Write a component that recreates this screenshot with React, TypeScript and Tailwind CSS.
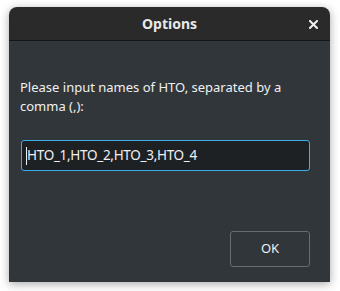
import React from "react";

export default function App() {
  return (
    <div className="w-[340px] h-[291px] bg-white pt-[7px] pl-[9px]" style={{ fontFamily: '"Noto Sans", sans-serif' }}>
      <div className="w-[321px] h-[275px] flex flex-col rounded-t-[8px] overflow-hidden shadow-[0_2px_10px_rgba(0,0,0,0.35)]">
        <div className="h-[33px] bg-[#2a2a2a] flex items-center relative border-b border-[#151515] box-content">
          <div className="w-full text-center text-[14px] font-bold text-[#e8e8e8]">Options</div>
          <div className="absolute right-[12px] top-[13px]">
            <svg width="9" height="9" viewBox="0 0 9 9" className="block">
              <path d="M1 1 L8 8 M8 1 L1 8" stroke="#f0f0f0" strokeWidth="2" strokeLinecap="square" />
            </svg>
          </div>
        </div>
        <div className="flex-1 bg-[#31363b] flex flex-col pl-[11px] pr-[20px]">
          <p className="mt-[37px] text-[13px] leading-[19px] text-[#eff0f1]">
            Please input names of HTO, separated by a comma (,):
          </p>
          <div className="mt-[24px] ml-[1px] h-[31px] border border-[#3daee9] rounded-[3px] bg-[#1e2124] flex items-center pl-[4px]">
            <span className="w-[1px] h-[18px] bg-[#eff0f1]"></span>
            <span className="text-[13.5px] tracking-[-0.3px] text-[#eff0f1]">HTO_1,HTO_2,HTO_3,HTO_4</span>
          </div>
          <div className="flex-1"></div>
          <div className="flex justify-end mb-[15px]">
            <div className="w-[80px] h-[36px] border border-[#686c70] rounded-[3px] flex items-center justify-center text-[13px] text-[#eff0f1]">
              OK
            </div>
          </div>
        </div>
      </div>
    </div>
  );
}
